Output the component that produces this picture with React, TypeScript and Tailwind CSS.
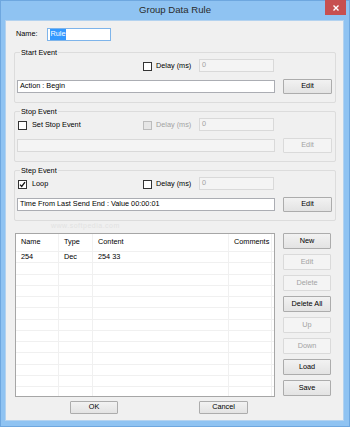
import React from "react";

const Check = ({ checked = false, disabled = false }: { checked?: boolean; disabled?: boolean }) => (
  <span
    className={`flex h-[9px] w-[9px] shrink-0 items-center justify-center border ${
      disabled ? "border-[#bcbcbc] bg-[#e6e6e6]" : "border-[#333333] bg-white"
    }`}
  >
    {checked && (
      <svg width="7" height="7" viewBox="0 0 7 7">
        <path d="M1 3.6 L2.7 5.4 L6 1.2" fill="none" stroke="#111" strokeWidth="1.3" />
      </svg>
    )}
  </span>
);

const Btn = ({ label, disabled = false, w = "w-[49px]", h = "h-[15px]" }: { label: string; disabled?: boolean; w?: string; h?: string }) => (
  <div
    className={`${w} ${h} flex shrink-0 items-center justify-center rounded-[1px] border ${
      disabled
        ? "border-[#dadada] bg-[#f4f4f4] text-[#a3a3a3]"
        : "border-[#acacac] bg-gradient-to-b from-[#f2f2f2] to-[#e3e3e3] text-black"
    }`}
  >
    {label}
  </div>
);

const Field = ({ value = "", disabled = false, w }: { value?: string; disabled?: boolean; w: string }) => (
  <div
    className={`${w} flex h-[13px] items-center border px-[2px] ${
      disabled ? "border-[#d9d9d9] bg-[#f4f4f4] text-[#a3a3a3]" : "border-[#abadb3] bg-white text-black"
    }`}
  >
    {value}
  </div>
);

const Group = ({
  title,
  left,
  delayOff,
  value,
  on,
}: {
  title: string;
  left?: React.ReactNode;
  delayOff: boolean;
  value: string;
  on: boolean;
}) => (
  <div className="relative h-[51px] w-[322px] rounded-[2px] border border-[#dcdcdc] px-[2px]">
    <span className="absolute left-[5px] top-[-5px] bg-[#f0f0f0] px-[1px] leading-[9px]">{title}</span>
    <div className="mt-[6px] flex h-[13px] items-center">
      <div className="flex w-[126px] items-center gap-[5px] pl-[1px] pt-[1px]">{left}</div>
      <div className="flex w-[56px] items-center gap-[4px] pt-[1px]">
        <Check disabled={delayOff} />
        <span className={delayOff ? "text-[#a3a3a3]" : ""}>Delay (ms)</span>
      </div>
      <Field w="w-[75px]" value="0" disabled />
    </div>
    <div className="mt-[7px] flex h-[15px] items-center gap-[8px]">
      <Field w="w-[258px]" value={value} disabled={!on} />
      <Btn label="Edit" disabled={!on} />
    </div>
  </div>
);

const cols = ["w-[43px]", "w-[34px]", "w-[136px]", "flex-1"];

export default function App() {
  const rows = Array.from({ length: 13 }, (_, i) => (i === 0 ? ["254", "Dec", "254 33", ""] : ["", "", "", ""]));
  const side = [
    ["New", false],
    ["Edit", true],
    ["Delete", true],
    ["Delete All", false],
    ["Up", true],
    ["Down", true],
    ["Load", false],
    ["Save", false],
  ] as const;

  return (
    <div className="flex h-[427px] w-[350px] flex-col border border-[#6ea7df] bg-[#8fc3f2] font-['Liberation_Sans',Arial,sans-serif] text-[7.3px] text-black">
      <div className="relative flex h-[19px] shrink-0 items-center justify-center">
        <span className="text-[9.6px] text-[#2b2b2b]">Group Data Rule</span>
        <div className="absolute right-[3px] top-[-1px] flex h-[15px] w-[21px] items-center justify-center bg-[#c75050]">
          <svg width="6" height="6" viewBox="0 0 6 6">
            <path d="M0.5 0.5 L5.5 5.5 M5.5 0.5 L0.5 5.5" stroke="#fff" strokeWidth="1.4" />
          </svg>
        </div>
      </div>

      <div className="ml-[4px] flex h-[401px] w-[339px] flex-col border border-[#b3d2ef] bg-[#f0f0f0]">
        <div className="ml-[10px] mt-[7px] flex h-[13px] items-center">
          <span className="w-[31px]">Name:</span>
          <div className="flex h-[13px] w-[64px] items-center border border-[#7eb4ea] bg-white px-[2px]">
            <span className="bg-[#3399ff] px-[0.5px] text-white">Rule</span>
          </div>
        </div>

        <div className="ml-[8px] mt-[11px] flex flex-col gap-[8px]">
          <Group title="Start Event" delayOff={false} value="Action : Begin" on />
          <Group
            title="Stop Event"
            left={
              <>
                <Check />
                <span>Set Stop Event</span>
              </>
            }
            delayOff
            value=""
            on={false}
          />
          <Group
            title="Step Event"
            left={
              <>
                <Check checked />
                <span>Loop</span>
              </>
            }
            delayOff={false}
            value="Time From Last Send End : Value 00:00:01"
            on
          />
        </div>

        <div className="relative ml-[9px] mt-[12px] flex gap-[8px]">
          <span className="pointer-events-none absolute left-[36px] top-[-12px] text-[7px] tracking-[0.5px] text-[#e2e2e2]">
            www.softpedia.com
          </span>
          <div className="h-[164px] w-[260px] overflow-hidden border border-[#a6a6a6] bg-white">
            <div className="flex h-[17px] items-center">
              {["Name", "Type", "Content", "Comments"].map((h, i) => (
                <div key={h} className={`${cols[i]} flex h-full items-center border-r border-[#f2f2f2] pl-[5px] ${i === 3 ? "mr-[2px]" : ""}`}>
                  {h}
                </div>
              ))}
            </div>
            {rows.map((r, ri) => (
              <div key={ri} className="flex h-[11.25px] items-center border-t border-[#f0f0f0]">
                {r.map((c, i) => (
                  <div key={i} className={`${cols[i]} flex h-full items-center border-r border-[#f0f0f0] pl-[5px] ${i === 3 ? "mr-[2px]" : ""}`}>
                    {c}
                  </div>
                ))}
              </div>
            ))}
          </div>
          <div className="flex w-[48px] flex-col gap-[5px]">
            {side.map(([l, d]) => (
              <Btn key={l} label={l} disabled={d} w="w-[48px]" h="h-[16px]" />
            ))}
          </div>
        </div>

        <div className="ml-[64px] mt-[4px] flex gap-[81px]">
          <Btn label="OK" w="w-[48px]" h="h-[13px]" />
          <Btn label="Cancel" w="w-[49px]" h="h-[13px]" />
        </div>
      </div>
    </div>
  );
}
